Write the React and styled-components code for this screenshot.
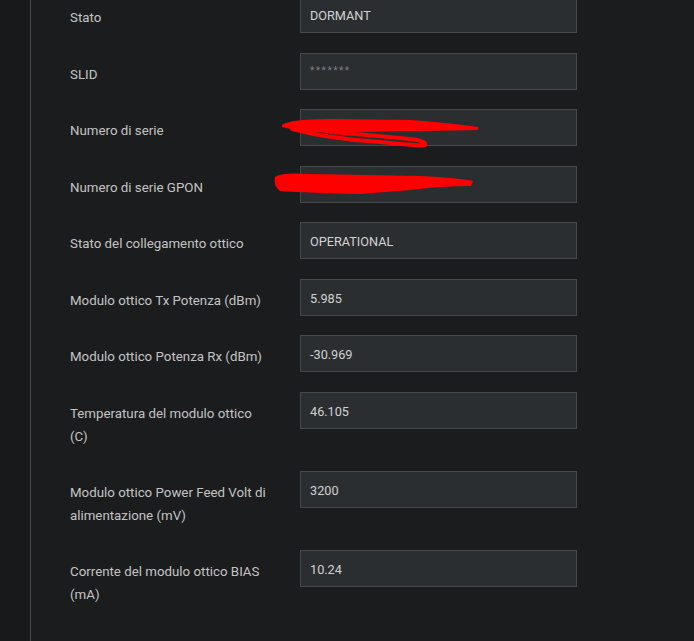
import React from "react";
import styled, { createGlobalStyle } from "styled-components";

const Global = createGlobalStyle`
  html, body { margin: 0; padding: 0; background: #1b1c1e; }
  body { font-family: Roboto, "Liberation Sans", Arial, sans-serif; }
`;

const Page = styled.div`
  display: flex;
  min-height: 641px;
  overflow: hidden;
  background: #1b1c1e;
`;

const Gutter = styled.div`
  width: 30px;
  flex: 0 0 30px;
  background: #18191b;
  border-right: 1px solid #4a4b4e;
`;

const Content = styled.div`
  flex: 1;
  padding-left: 39px;
`;

const Form = styled.div`
  display: flex;
  flex-direction: column;
  margin-top: -4px;
`;

const Row = styled.div`
  position: relative;
  display: grid;
  grid-template-columns: 230px 277px;
  align-items: start;
  margin-bottom: 19.5px;
`;

const Label = styled.div`
  padding: 10px 30px 3.5px 0;
  font-size: 13.3px;
  line-height: 23px;
  color: #c4c4c4;
`;

const Field = styled.div`
  box-sizing: border-box;
  height: 37px;
  display: flex;
  align-items: center;
  padding: 2px 9px 0;
  background: #2b2e31;
  border: 1px solid #46494c;
  font-size: 12.7px;
  color: ${(p) => (p.$masked ? "#7c7e81" : "#d2d2d2")};
  letter-spacing: ${(p) => (p.$masked ? "1.5px" : "0")};
  ${(p) => (p.$masked ? "font-size: 10px; padding-top: 0; padding-bottom: 2px;" : "")}
`;

const Scribble = styled.svg`
  position: absolute;
  left: 200px;
  top: 0;
  width: 220px;
  height: 45px;
  pointer-events: none;
`;

const rows = [
  { label: "Stato", value: "DORMANT" },
  { label: "SLID", value: "*******", masked: true },
  { label: "Numero di serie", value: "", scribble: 1 },
  { label: "Numero di serie GPON", value: "", scribble: 2 },
  { label: "Stato del collegamento ottico", value: "OPERATIONAL" },
  { label: "Modulo ottico Tx Potenza (dBm)", value: "5.985" },
  { label: "Modulo ottico Potenza Rx (dBm)", value: "-30.969" },
  { label: "Temperatura del modulo ottico (C)", value: "46.105" },
  { label: "Modulo ottico Power Feed Volt di alimentazione (mV)", value: "3200" },
  { label: "Corrente del modulo ottico BIAS (mA)", value: "10.24" },
];

function Mark({ kind }) {
  if (kind === 1) {
    return (
      <Scribble viewBox="0 0 220 45">
        <path
          d="M12 16 Q 20 10 60 10 L 140 11 Q 180 14 208 18 L 208 21 Q 170 22 130 22 L 60 24 Q 30 23 12 18 Z"
          fill="#ff0000"
        />
        <path
          d="M22 20 Q 60 30 110 33 Q 150 37 155 36 Q 157 32 140 30 Q 100 26 60 23"
          fill="none"
          stroke="#ff0000"
          strokeWidth="4"
          strokeLinecap="round"
          strokeLinejoin="round"
        />
      </Scribble>
    );
  }
  return (
    <Scribble viewBox="0 0 220 45">
      <path
        d="M5 11 Q 10 6 40 8 L 150 10 Q 190 12 203 15 L 201 20 Q 170 20 140 24 L 90 28 Q 40 27 10 25 Q 3 20 5 11 Z"
        fill="#ff0000"
      />
    </Scribble>
  );
}

export default function App() {
  return (
    <>
      <Global />
      <Page>
        <Gutter />
        <Content>
          <Form>
            {rows.map((r) => (
              <Row key={r.label}>
                <Label>{r.label}</Label>
                <Field $masked={r.masked}>{r.value}</Field>
                {r.scribble ? <Mark kind={r.scribble} /> : null}
              </Row>
            ))}
          </Form>
        </Content>
      </Page>
    </>
  );
}
